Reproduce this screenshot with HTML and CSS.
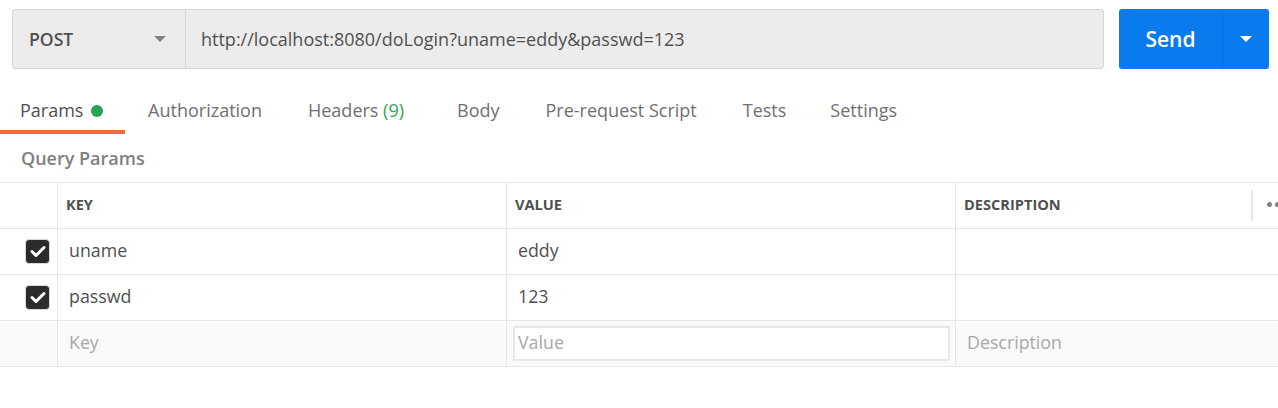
FILE: index.html
```html
<!DOCTYPE html>
<html>
<head>
<meta charset="utf-8">
<link rel="stylesheet" href="styles.css">
</head>
<body>
<div class="req-bar">
  <div class="req-input">
    <div class="method">
      <span class="method-name">POST</span>
      <span class="caret caret-gray"></span>
    </div>
    <div class="url">http://localhost:8080/doLogin?uname=eddy&amp;passwd=123</div>
  </div>
  <div class="send">
    <span class="send-label">Send</span>
    <span class="send-drop"><span class="caret caret-white"></span></span>
  </div>
</div>

<div class="tabs">
  <div class="tab active">Params <span class="dot"></span></div>
  <div class="tab">Authorization</div>
  <div class="tab tab-headers">Headers <span class="count">(9)</span></div>
  <div class="tab">Body</div>
  <div class="tab">Pre-request Script</div>
  <div class="tab">Tests</div>
  <div class="tab">Settings</div>
</div>

<div class="section-title">Query Params</div>

<div class="params">
  <div class="row head">
    <div class="cell check"></div>
    <div class="cell hcell">KEY</div>
    <div class="cell hcell">VALUE</div>
    <div class="cell hcell desc-head"><span>DESCRIPTION</span><span class="sep"></span><span class="more"><i></i><i></i><i></i></span></div>
  </div>
  <div class="row">
    <div class="cell check"><span class="box"><svg width="16" height="13" viewBox="0 0 16 13"><path d="M2 6.5 L6 10.5 L14 2.5" fill="none" stroke="#fff" stroke-width="3" stroke-linecap="round" stroke-linejoin="round"/></svg></span></div>
    <div class="cell">uname</div>
    <div class="cell">eddy</div>
    <div class="cell"></div>
  </div>
  <div class="row">
    <div class="cell check"><span class="box"><svg width="16" height="13" viewBox="0 0 16 13"><path d="M2 6.5 L6 10.5 L14 2.5" fill="none" stroke="#fff" stroke-width="3" stroke-linecap="round" stroke-linejoin="round"/></svg></span></div>
    <div class="cell">passwd</div>
    <div class="cell">123</div>
    <div class="cell"></div>
  </div>
  <div class="row new">
    <div class="cell check"></div>
    <div class="cell ph">Key</div>
    <div class="cell input-cell"><div class="input ph">Value</div></div>
    <div class="cell ph">Description</div>
  </div>
</div>
</body>
</html>
```

FILE: styles.css
```css
* { box-sizing: border-box; }
body {
  margin: 0;
  background: #fff;
  font-family: "Open Sans", "Noto Sans", sans-serif;
  color: #505050;
  width: 1278px;
  overflow: hidden;
}
.req-bar {
  display: flex;
  padding: 9px 0 0 12px;
  height: 69px;
}
.req-input {
  display: flex;
  width: 1092px;
  height: 60px;
  background: #ececec;
  border: 1px solid #d6d6d6;
  border-radius: 3px;
}
.method {
  width: 173px;
  display: flex;
  align-items: center;
  justify-content: space-between;
  padding: 0 19px 0 16px;
  border-right: 1px solid #d6d6d6;
}
.method-name {
  font-size: 17.6px;
  font-weight: 600;
  color: #505050;
}
.caret {
  width: 0;
  height: 0;
  border-left: 6px solid transparent;
  border-right: 6px solid transparent;
}
.caret-gray { border-top: 6px solid #808080; }
.caret-white { border-top: 6px solid #fff; }
.url {
  display: flex;
  align-items: center;
  padding-left: 15px;
  font-size: 18px;
  color: #505050;
}
.send {
  margin-left: 15px;
  width: 150px;
  height: 60px;
  background: #097bed;
  border-radius: 3px;
  display: flex;
  color: #fff;
}
.send-label {
  width: 104px;
  display: flex;
  align-items: center;
  justify-content: center;
  font-size: 21px;
  font-weight: 600;
  border-right: 1px solid #0b6fd3;
}
.send-drop {
  flex: 1;
  display: flex;
  align-items: center;
  justify-content: center;
}
.tabs {
  display: flex;
  height: 65px;
  padding-top: 17px;
}
.tab {
  height: 48px;
  padding: 12px 23px 0 23px;
  font-size: 18px;
  color: #707070;
  display: flex;
  align-items: flex-start;
  white-space: pre;
}
.tab:first-child { padding-left: 20px; padding-right: 22px; }
.tab:last-child { padding-left: 21px; }
.tab.active {
  color: #505050;
  border-bottom: 4px solid #f26b3a;
}
.dot {
  display: inline-block;
  width: 12px;
  height: 12px;
  border-radius: 50%;
  background: #26a354;
  margin: 7px 0 0 3px;
}
.count { color: #2fa84f; }
.tab-headers { padding-right: 30px; }
.section-title {
  height: 48px;
  padding: 12px 0 0 21px;
  font-size: 18px;
  font-weight: 600;
  color: #808080;
}
.params {
  border-top: 1px solid #e6e6e6;
}
.row {
  display: grid;
  grid-template-columns: 58px 449px 449px 1fr;
  height: 46px;
  border-bottom: 1px solid #e6e6e6;
}
.cell {
  display: flex;
  align-items: center;
  padding-left: 11px;
  padding-bottom: 3px;
  font-size: 17.8px;
  color: #505050;
  border-right: 1px solid #e6e6e6;
}
.cell:last-child { border-right: none; }
.head .hcell {
  padding-left: 8px;
  font-size: 14.6px;
  font-weight: 700;
  color: #505050;
}
.desc-head { position: relative; }
.sep {
  position: absolute;
  left: 295px;
  top: 7px;
  width: 2px;
  height: 31px;
  background: #e6e6e6;
}
.more {
  position: absolute;
  left: 311px;
  top: 19px;
  display: flex;
  gap: 3px;
}
.more i {
  width: 5px;
  height: 5px;
  border-radius: 50%;
  background: #808080;
}
.check {
  padding-left: 25px;
  padding-bottom: 1px;
}
.box {
  width: 25px;
  height: 25px;
  border-radius: 4px;
  background: #2b2b2b;
  border: 1px solid #d8d8d8;
  display: flex;
  align-items: center;
  justify-content: center;
}
.new { background: #fafafa; }
.ph { color: #a8a8a8; }
.input-cell { padding-left: 6px; padding-right: 5px; padding-bottom: 1px; }
.input {
  width: 100%;
  height: 35px;
  background: #fff;
  border: 2px solid #e8e8e8;
  display: flex;
  align-items: center;
  padding: 0 0 2px 3px;
  font-size: 17.8px;
}
```
